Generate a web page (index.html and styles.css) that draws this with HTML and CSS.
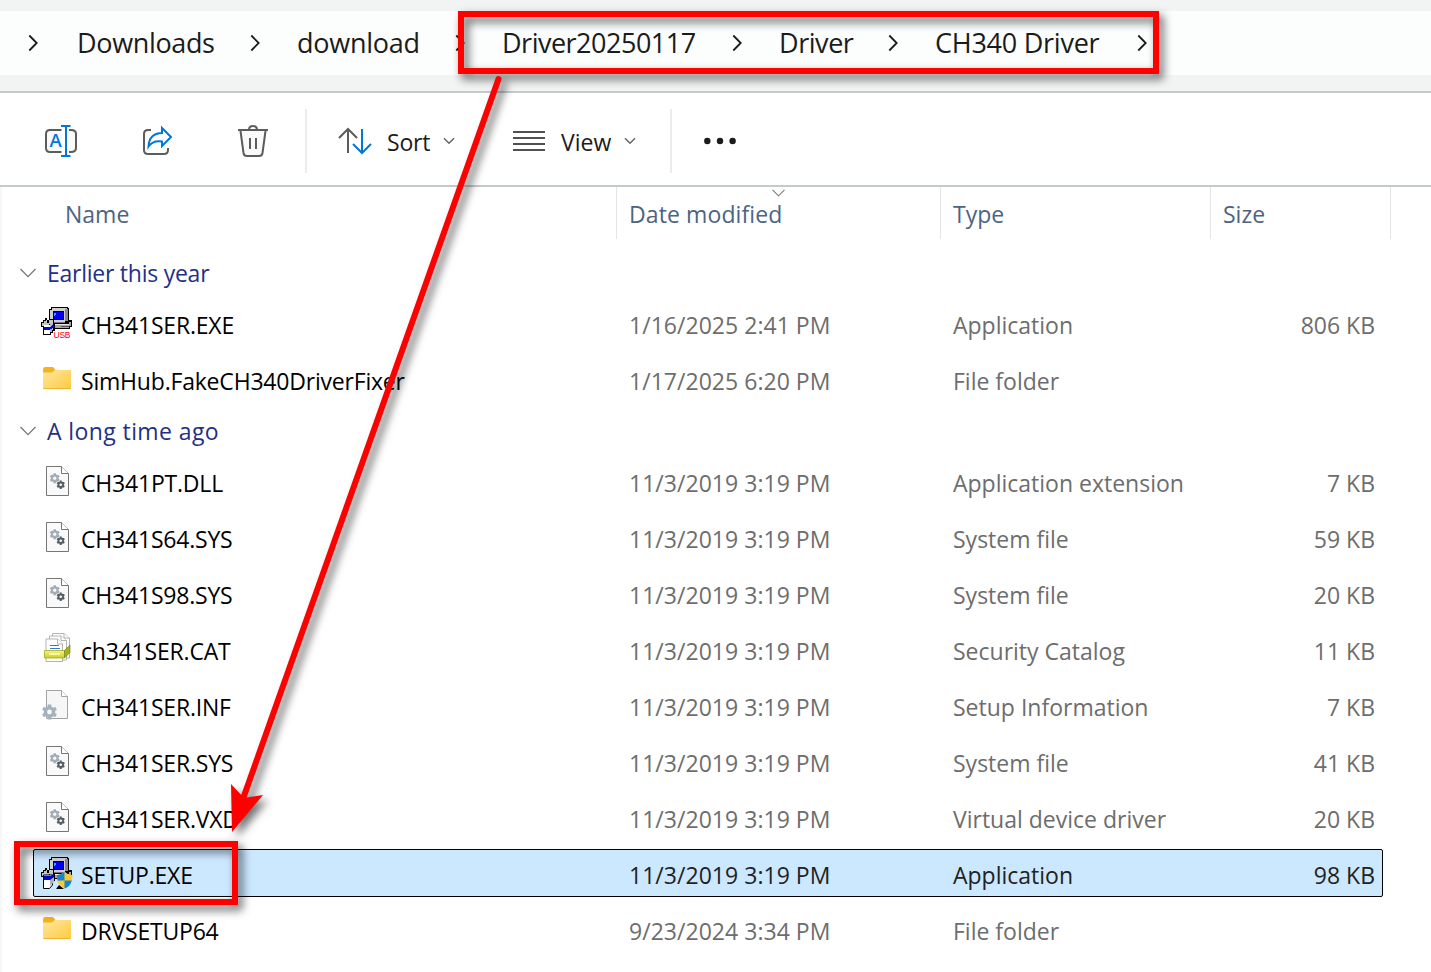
FILE: index.html
```html
<!DOCTYPE html>
<html lang="en">
<head>
<meta charset="utf-8">
<title>CH340 Driver</title>
<link rel="stylesheet" href="styles.css">
</head>
<body>
<svg class="defs" width="0" height="0">
  <defs>
    <linearGradient id="gold" x1="0" y1="0" x2="1" y2="1"><stop offset="0" stop-color="#ffe7a2"/><stop offset="1" stop-color="#ffcb3d"/></linearGradient>
    <linearGradient id="band" x1="0" y1="0" x2="0" y2="1"><stop offset="0" stop-color="#f3f58a"/><stop offset="1" stop-color="#c9cf22"/></linearGradient>
    <symbol id="crumb" viewBox="0 0 10 18"><path d="M1.3 1.5 8.7 9 1.3 16.5" fill="none" stroke="#1b1b1b" stroke-width="1.8"/></symbol>
    <symbol id="down" viewBox="0 0 12 8"><path d="M1 1.2 6 6.2 11 1.2" fill="none" stroke="#666" stroke-width="1.5"/></symbol>
    <symbol id="fold" viewBox="0 0 16 10"><path d="M.5 1 8 8.6 15.500 1" fill="none" stroke="#777" stroke-width="1.3"/></symbol>
    <symbol id="gear" viewBox="-6 -6 12 12">
      <path d="M0-5.300V5.300M-4.600-2.650 4.600 2.650M-4.600 2.650 4.600-2.650" stroke="currentColor" stroke-width="2.600"/>
      <circle r="3" fill="none" stroke="currentColor" stroke-width="2.200"/><circle r="1.700" fill="#f8f8f8"/>
    </symbol>
    <symbol id="folder" viewBox="0 0 32 32">
      <path d="M2 6.500Q2 4 4 4H12L14.500 7V12H2Z" fill="#f5b21b"/>
      <path d="M2 9.500H11L14 7H29Q30 7 30 8V25Q30 26 29 26H3Q2 26 2 25Z" fill="url(#gold)"/>
      <path d="M2.500 25.600H29.500" stroke="#e5ad35" stroke-width=".9"/>
    </symbol>
    <symbol id="sysfile" viewBox="0 0 32 32">
      <path d="M5.500 1.500H20.500L27.500 8.500V30.500H5.500Z" fill="#f9f9f9" stroke="#767676"/>
      <path d="M20.500 1.500V8.500H27.500" fill="#fff" stroke="#767676"/>
      <svg x="8" y="7.500" width="11.500" height="11.500" color="#a3adb5"><use href="#gear"/></svg>
      <svg x="15" y="15" width="9.500" height="9.500" color="#555e65"><use href="#gear"/></svg>
    </symbol>
    <symbol id="inffile" viewBox="0 0 32 32">
      <path d="M5.500 1.500H20.500L26.500 7.500V29.500H5.500Z" fill="#f6f6f6" stroke="#a3a3a3"/>
      <path d="M20.500 1.500V7.500H26.500" fill="#fff" stroke="#a3a3a3"/>
      <svg x="0" y="14" width="17" height="18" color="#a5b1bb"><use href="#gear"/></svg>
    </symbol>
    <symbol id="catfile" viewBox="0 0 32 32">
      <g fill="#fff" stroke="#aaa" stroke-width=".9">
        <path d="M11.500 .5H23L28.500 5V25H11.500Z"/><path d="M8.500 3H20L25.500 7.500V27H8.500Z"/><path d="M5 6H16.500L21.500 11V28.500H5Z"/>
        <path d="M16.500 6V11H21.500M20 3V7.500H25.500M23 .5V5H28.500"/>
      </g>
      <path d="M9 12.500H18M9 15.500H19" stroke="#3976c5" stroke-width="1.200"/>
      <path d="M3.500 17.500H23.500V25H3.500Z" fill="url(#band)" stroke="#a7aa19" stroke-width=".8"/>
      <path d="M23.500 17.500 29 12V19.500L23.500 25Z" fill="#a9ae20" stroke="#7f8516" stroke-width=".7"/>
      <path d="M8 21H19" stroke="#fffec0" stroke-width="1.500"/>
    </symbol>
    <symbol id="computer" viewBox="0 0 32 32">
      <g shape-rendering="crispEdges">
        <path d="M10 0H27V1H28V13H31V20H29V22H12V17H8V2H10Z" fill="#000"/>
        <path d="M11 1H26V2H24V15H9V3H11Z" fill="#d0d0d0"/>
        <path d="M24 2H27V14H24Z" fill="#8a8a8a"/>
        <path d="M12 4H23V13H12Z" fill="#000"/><path d="M13 5H22V12H13Z" fill="#00e"/>
        <path d="M13 6H15V8H14V9H13Z" fill="#17bce5"/>
        <path d="M9 15H24V16H9Z" fill="#777"/>
        <path d="M13 17H28V15H30V19H28V21H13Z" fill="#a7a7a7"/><path d="M13 17H28V18H13Z" fill="#e8e8e8"/><path d="M20 19H28V20H20Z" fill="#555"/>
        <path d="M0 15H2V13H4V11H6V13H8V12H13V17H14V24H12V26H10V28H2V20H0Z" fill="#000"/>
        <path d="M1 16H3V14H5V13H6V16H8V13H12V17H8V19H1Z" fill="#c4c4c4"/>
        <path d="M3 18H9V27H3Z" fill="#fff"/><path d="M9 17H12V23H11V25H9Z" fill="#aab3c0"/>
        <path d="M3 20H9V23H3Z" fill="#0008c8"/><path d="M9 20H10V19H11V18H13V21H11V22H9Z" fill="#00f"/>
      </g>
    </symbol>
    <symbol id="usbsetup" viewBox="0 0 32 32">
      <use href="#computer"/>
      <text x="12.500" y="31" font-family="Liberation Sans, sans-serif" font-size="8.500" textLength="17" fill="#f00">USB</text>
    </symbol>
    <symbol id="shieldsetup" viewBox="0 0 32 32">
      <use href="#computer"/>
      <path d="M2.500 18V31.500H8.500L11.500 28V18Z" fill="#fff" stroke="#000"/>
      <path d="M9 18H13V25L9 29Z" fill="#aab3c0"/>
      <path d="M3 19H9L13 17V20L9 23H3Z" fill="#0008c8"/>
      <path d="M15 32 18 28 23 32Z" fill="#000"/>
      <path d="M23.500 14.500Q20 18 16 18C16 25 18 29 23.500 31.500C29 29 31.500 25 31.500 18Q27 18 23.500 14.500Z" fill="#fdc82a"/>
      <path d="M23.500 14.500V23.500H16.500Q16 21 16 18 20 18 23.500 14.500ZM23.500 23.500H30.800C29.500 28 27.500 30 23.500 31.500Z" fill="#1583d8"/>
    </symbol>
  </defs>
</svg>

<main class="window">
  <nav class="address">
    <svg class="sep"><use href="#crumb"/></svg><span class="crumb c1">Downloads</span>
    <svg class="sep"><use href="#crumb"/></svg><span class="crumb c2">download</span>
    <svg class="sep"><use href="#crumb"/></svg><span class="crumb c3">Driver20250117</span>
    <svg class="sep"><use href="#crumb"/></svg><span class="crumb c4">Driver</span>
    <svg class="sep"><use href="#crumb"/></svg><span class="crumb c5">CH340 Driver</span>
    <svg class="sep"><use href="#crumb"/></svg>
  </nav>

  <div class="toolbar">
    <svg class="tool rename" viewBox="0 0 36 36" fill="none" stroke="#5c5c5c" stroke-width="2">
      <path d="M18.500 7H7Q3 7 3 11V25Q3 29 7 29H18.500M26 7H28Q33 7 33 11V25Q33 29 28 29H26" fill="#fafafa"/>
      <path d="M18 3H27.500M18 33H27.500M23 3V33" stroke="#0078d7"/>
      <text x="6.500" y="24" font-family="Open Sans, sans-serif" font-size="18.500" font-weight="600" fill="#0078d7" stroke="none">A</text>
    </svg>
    <svg class="tool share" viewBox="0 0 36 36" fill="none" stroke="#5c5c5c" stroke-width="2">
      <path d="M12 7H9Q5 7 5 11V27Q5 31 9 31H25Q29 31 29 27V25"/>
      <path d="M23 5 32 14 23 23V18.500Q14 17 9.500 23.500Q10 10.500 23 10Z" stroke="#0078d7"/>
    </svg>
    <svg class="tool trash" viewBox="0 0 36 36" fill="none" stroke="#5c5c5c" stroke-width="2">
      <path d="M5.500 8 8.500 30Q9 33 12 33H24Q27 33 27.500 30L30.500 8" fill="#fafafa"/>
      <path d="M3 7H33M14 7Q14 3 18 3T22 7M15 15V26M21 15V26"/>
    </svg>
    <i class="rule"></i>
    <svg class="sorticon" viewBox="0 0 34 28" fill="none" stroke-width="2">
      <path d="M10 26V2M1 11 10 2 19 11" stroke="#5c5c5c"/><path d="M24 2V26M15 17 24 26 33 17" stroke="#0078d7"/>
    </svg>
    <span class="label sort">Sort</span>
    <svg class="drop"><use href="#down"/></svg>
    <svg class="viewicon" viewBox="0 0 32 20"><path d="M0 1H32M0 7H32M0 13H32M0 19H32" stroke="#505050" stroke-width="2"/></svg>
    <span class="label view">View</span>
    <svg class="drop"><use href="#down"/></svg>
    <i class="rule second"></i>
    <svg class="more" viewBox="0 0 34 8" fill="#1b1b1b"><circle cx="4.300" cy="4" r="3.200"/><circle cx="17" cy="4" r="3.200"/><circle cx="29.600" cy="4" r="3.200"/></svg>
  </div>

  <section class="files">
    <header class="columns">
      <span class="name">Name</span><span class="date">Date modified<svg class="sorted"><use href="#fold"/></svg></span><span class="type">Type</span><span class="size">Size</span>
    </header>

    <h2 class="group g1"><svg><use href="#fold"/></svg><span>Earlier this year</span></h2>
    <div class="row"><svg><use href="#usbsetup"/></svg><span class="name">CH341SER.EXE</span><span class="date">1/16/2025 2:41 PM</span><span class="type">Application</span><span class="size">806 KB</span></div>
    <div class="row"><svg><use href="#folder"/></svg><span class="name">SimHub.FakeCH340DriverFixer</span><span class="date">1/17/2025 6:20 PM</span><span class="type">File folder</span><span class="size"></span></div>

    <h2 class="group g2"><svg><use href="#fold"/></svg><span>A long time ago</span></h2>
    <div class="row"><svg><use href="#sysfile"/></svg><span class="name">CH341PT.DLL</span><span class="date">11/3/2019 3:19 PM</span><span class="type">Application extension</span><span class="size">7 KB</span></div>
    <div class="row"><svg><use href="#sysfile"/></svg><span class="name">CH341S64.SYS</span><span class="date">11/3/2019 3:19 PM</span><span class="type">System file</span><span class="size">59 KB</span></div>
    <div class="row"><svg><use href="#sysfile"/></svg><span class="name">CH341S98.SYS</span><span class="date">11/3/2019 3:19 PM</span><span class="type">System file</span><span class="size">20 KB</span></div>
    <div class="row"><svg><use href="#catfile"/></svg><span class="name">ch341SER.CAT</span><span class="date">11/3/2019 3:19 PM</span><span class="type">Security Catalog</span><span class="size">11 KB</span></div>
    <div class="row"><svg><use href="#inffile"/></svg><span class="name">CH341SER.INF</span><span class="date">11/3/2019 3:19 PM</span><span class="type">Setup Information</span><span class="size">7 KB</span></div>
    <div class="row"><svg><use href="#sysfile"/></svg><span class="name">CH341SER.SYS</span><span class="date">11/3/2019 3:19 PM</span><span class="type">System file</span><span class="size">41 KB</span></div>
    <div class="row"><svg><use href="#sysfile"/></svg><span class="name">CH341SER.VXD</span><span class="date">11/3/2019 3:19 PM</span><span class="type">Virtual device driver</span><span class="size">20 KB</span></div>
    <div class="row selected"><svg><use href="#shieldsetup"/></svg><span class="name">SETUP.EXE</span><span class="date">11/3/2019 3:19 PM</span><span class="type">Application</span><span class="size">98 KB</span></div>
    <div class="row"><svg><use href="#folder"/></svg><span class="name">DRVSETUP64</span><span class="date">9/23/2024 3:34 PM</span><span class="type">File folder</span><span class="size"></span></div>
  </section>

  <div class="mark path-mark"></div>
  <div class="mark setup-mark"></div>
  <svg class="arrow" viewBox="0 0 1431 972">
    <path d="M498.500 79 244 796" stroke="#f00" stroke-width="6" stroke-linecap="round"/>
    <path d="M232 832 231 784 244 798 263 795Z" fill="#f00"/>
  </svg>
</main>
</body>
</html>
```
FILE: styles.css
```css
* { box-sizing: border-box; }
body {
  margin: 0;
  background: #fff;
  font-family: "Open Sans", "Noto Sans", sans-serif;
  font-size: 23px;
}
svg { display: block; flex: none; }
.defs { position: absolute; }
.window { position: relative; width: 1431px; height: 972px; overflow: hidden; }

.address {
  height: 93px;
  display: flex;
  align-items: center;
  padding: 0 0 16px 28px;
  border-top: 11px solid #f2f4f3;
  border-bottom: 2px solid #c4c9ca;
  background: linear-gradient(#fcfdfd 64px, #f2f4f4 64px);
  color: #1b1b1b;
  font-size: 27px;
}
.sep { width: 10px; height: 18px; }
.crumb { margin-top: -2px; white-space: nowrap; letter-spacing: -.35px; }
.c1 { margin-left: 39px; width: 173px; }
.c2 { margin-left: 37px; width: 158px; letter-spacing: -.25px; }
.c3 { margin-left: 37px; width: 230px; letter-spacing: -.5px; }
.c4 { margin-left: 37px; width: 109px; letter-spacing: -.45px; }
.c5 { margin-left: 37px; width: 202px; letter-spacing: -.25px; }

.toolbar {
  height: 94px;
  display: flex;
  align-items: center;
  padding: 0 0 0 43px;
  border-bottom: 2px solid #c4c9ca;
  color: #1b1b1b;
}
.tool { width: 36px; height: 36px; margin-top: 4px; }
.share { margin-left: 60px; }
.trash { margin-left: 60px; }
.rule { width: 2px; height: 64px; margin: 3px 0 0 34px; background: #ececec; }
.sorticon { width: 34px; height: 28px; margin: 4px 0 0 31px; }
.label { margin-top: 6px; white-space: nowrap; }
.sort { width: 56px; margin-left: 15px; letter-spacing: -.2px; }
.drop { width: 12px; height: 8px; margin-top: 4px; }
.viewicon { width: 32px; height: 20px; margin: 4px 0 0 58px; }
.view { width: 63px; margin-left: 16px; }
.rule.second { margin-left: 34px; }
.more { width: 34px; height: 8px; margin: 4px 0 0 31px; }

.files { height: 785px; border-left: 2px solid #f7f7f7; }
.columns { display: flex; height: 52px; line-height: 54px; color: #4c6482; }
.columns span { border-right: 1px solid #e5e5e5; white-space: nowrap; }
.columns .name { width: 615px; padding-left: 63px; }
.columns .date { position: relative; width: 324px; padding-left: 12px; letter-spacing: .1px; }
.columns .type { width: 270px; padding-left: 12px; }
.columns .size { width: 180px; padding-left: 12px; }
.sorted { position: absolute; left: 154px; top: 2px; width: 15px; height: 8px; }

.group {
  display: flex;
  align-items: center;
  height: 46px;
  margin: 0;
  padding-left: 18px;
  color: #1f3087;
  font-size: 23px;
  font-weight: 400;
}
.group.g1 { margin-top: 10px; }
.group svg { width: 16px; height: 10px; margin-top: 1px; }
.group span { margin: 2px 0 0 11px; }
.g1 span { letter-spacing: -.25px; }
.g2 span { letter-spacing: .4px; }

.row {
  display: grid;
  grid-template-columns: 32px 556px 324px 270px 160px;
  align-items: center;
  width: 1350px;
  height: 48px;
  margin: 4px 0 8px 31px;
  padding-left: 7px;
  border: 1px solid transparent;
  border-radius: 2px;
  color: #6d6d6d;
}
.row + .row { margin-top: 0; }
.row:has(+ .group) { margin-bottom: 4px; }
.row svg { width: 32px; height: 32px; }
.row span { margin-top: 4px; white-space: nowrap; }
.row .name { padding-left: 8px; color: #000; letter-spacing: -.2px; }
.row .date { letter-spacing: .03px; }
.row .size { padding-right: 8px; text-align: right; }
.row.selected { background: #cce8ff; border-color: #000; color: #222; }

.mark { position: absolute; border: 6px solid #f00; filter: drop-shadow(4px 5px 5px rgba(0, 0, 0, .65)); }
.path-mark { left: 458px; top: 11px; width: 701px; height: 63px; }
.setup-mark { left: 14px; top: 841px; width: 224px; height: 64px; }
.arrow { position: absolute; inset: 0; width: 1431px; height: 972px; filter: drop-shadow(5px 5px 4px rgba(0, 0, 0, .55)); }
```
